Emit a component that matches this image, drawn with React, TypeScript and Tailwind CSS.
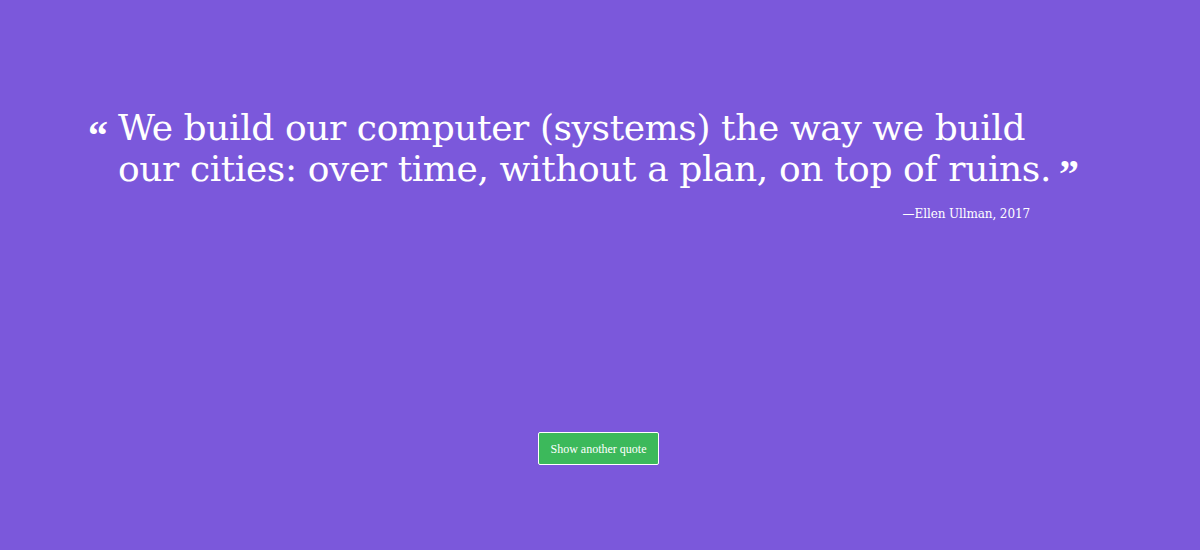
export default function App() {
  return (
    <div className="h-[550px] w-full bg-[#7b58db] text-white font-['DejaVu_Serif',serif] flex flex-col">
      <div className="pt-[108px] pl-[88px] w-[1090px]">
        <div className="flex items-start">
          <span className="font-['Liberation_Serif',serif] text-[40px] leading-none font-bold mt-[8px] mr-[8px] w-[22px]">&ldquo;</span>
          <p className="text-[36px] leading-[40px] tracking-[-0.4px]">
            <span className="block">We build our computer (systems) the way we build</span>
            <span className="block">
              our cities: over time, without a plan, on top of ruins.
              <span className="font-['Liberation_Serif',serif] text-[40px] font-bold ml-[8px] relative top-[6px]">&rdquo;</span>
            </span>
          </p>
        </div>
        <div className="flex justify-end pr-[60px] mt-[16px]">
          <span className="text-[12px] tracking-[-0.1px]">—Ellen Ullman, 2017</span>
        </div>
      </div>
      <div className="flex justify-center mt-[209px]">
        <button className="h-[33px] w-[121px] bg-[#3cb95b] border border-white rounded-[2px] text-[12px] font-['Liberation_Serif',serif] ml-[-3px]">
          Show another quote
        </button>
      </div>
    </div>
  );
}
